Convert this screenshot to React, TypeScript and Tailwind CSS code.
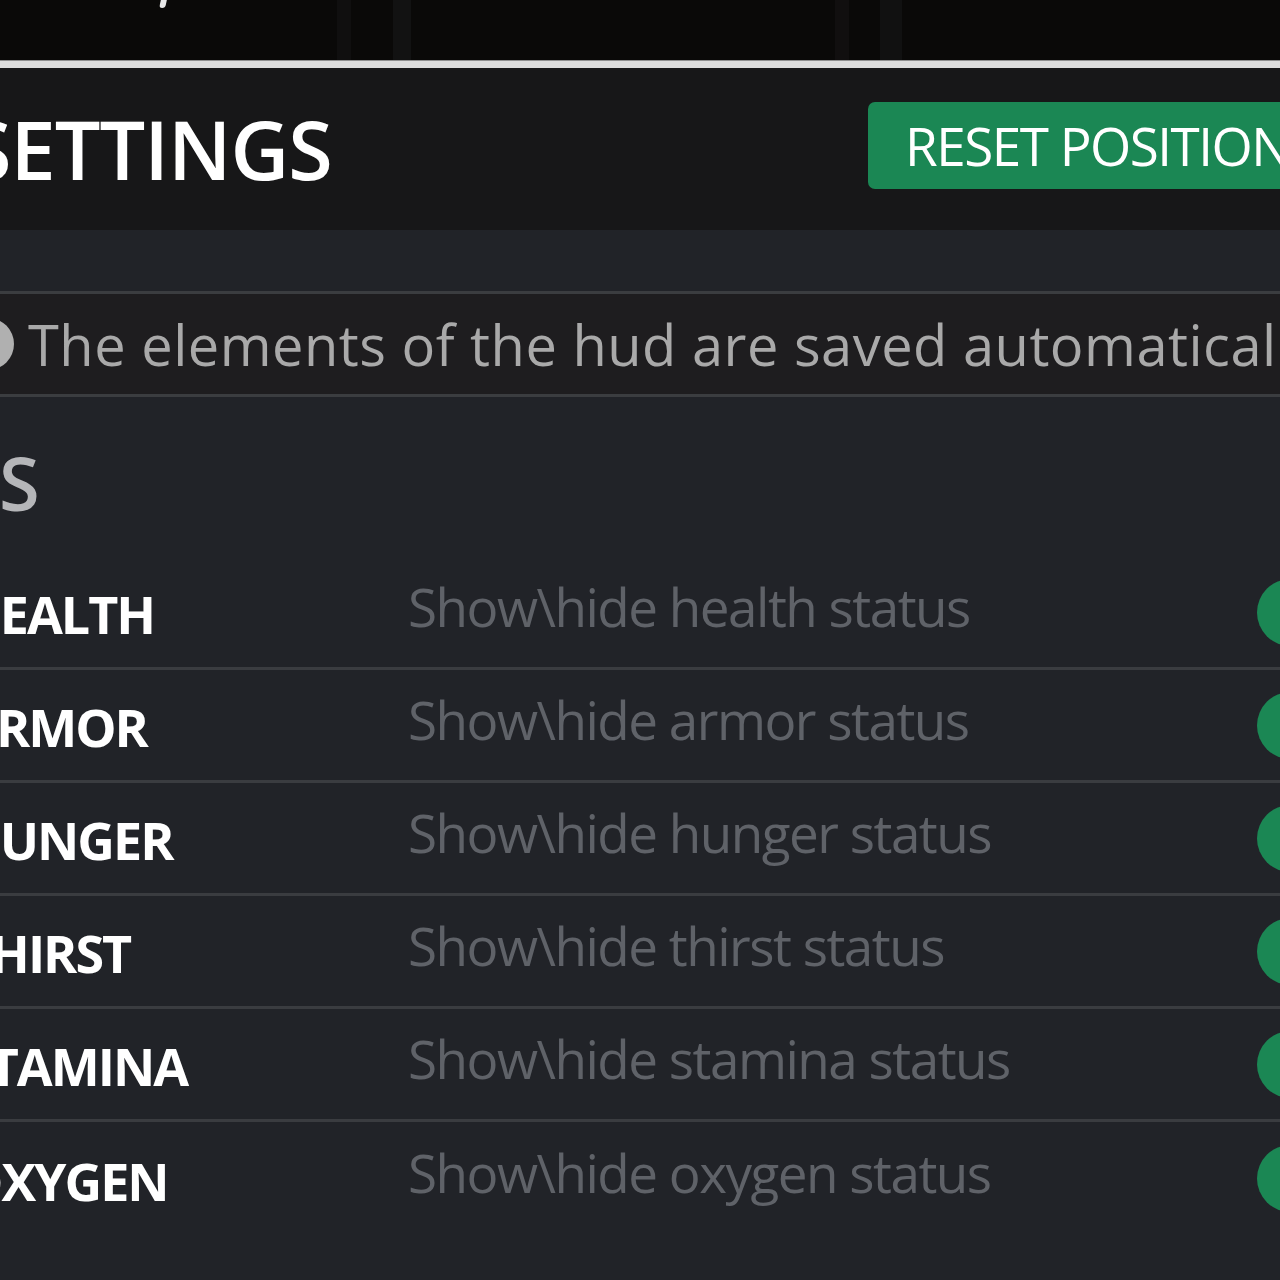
import React from "react";

const rows = [
  { label: "HEALTH", desc: "Show\\hide health status" },
  { label: "ARMOR", desc: "Show\\hide armor status" },
  { label: "HUNGER", desc: "Show\\hide hunger status" },
  { label: "THIRST", desc: "Show\\hide thirst status" },
  { label: "STAMINA", desc: "Show\\hide stamina status" },
  { label: "OXYGEN", desc: "Show\\hide oxygen status" },
];

export default function App() {
  return (
    <div
      className="w-[1280px] h-[1280px] overflow-hidden bg-[#212328] flex flex-col"
      style={{ fontFamily: '"Open Sans", "Noto Sans", sans-serif' }}
    >
      {/* top dark scene */}
      <div className="relative h-[60px] shrink-0 bg-[#0a0908] overflow-hidden">
        <div className="absolute left-[337px] top-0 h-full w-[14px] bg-[#100f0f]" />
        <div className="absolute left-[393px] top-0 h-full w-[18px] bg-[#121212]" />
        <div className="absolute left-[835px] top-0 h-full w-[14px] bg-[#110f0f]" />
        <div className="absolute left-[880px] top-0 h-full w-[22px] bg-[#111111]" />
        <div className="absolute left-[160px] top-0 h-[8px] w-[6px] bg-[#e8e8e8] rounded-b-full -skew-x-12" />
      </div>
      <div className="h-[8px] shrink-0 bg-[#dcdcdc] border-t border-[#8e8e8e]" />

      {/* header */}
      <div className="h-[162px] shrink-0 bg-[#171718] grid grid-cols-[868px_1fr] overflow-hidden">
        <div className="flex items-center">
          <span className="-ml-[33px] text-[81px] font-semibold text-white leading-none tracking-[-1px] pb-[2px] whitespace-nowrap">
            SETTINGS
          </span>
        </div>
        <div className="pt-[34px]">
          <div className="w-[520px] h-[87px] rounded-[7px] bg-[#1b8754] flex items-center pl-[37px]">
            <span className="text-[53px] text-white leading-none tracking-[-1.5px] whitespace-nowrap">
              RESET POSITION
            </span>
          </div>
        </div>
      </div>

      {/* body */}
      <div className="flex flex-col pt-[61px]">
        <div className="h-[106px] border-y-[3px] border-[#3b3d40] bg-[#1e1d1f] flex items-center whitespace-nowrap">
          <div className="-ml-[38px] w-[52px] h-[52px] rounded-full bg-[#b0b0b0] shrink-0" />
          <span className="ml-[14px] text-[56px] text-[#a9a9a9] leading-none tracking-[0.5px]">
            The elements of the hud are saved automatically
          </span>
        </div>

        <div className="h-[160px] flex items-center pt-[12px]">
          <span className="-ml-[326px] text-[74px] font-semibold text-[#b5b6b9] leading-none tracking-[-1px] whitespace-nowrap">
            ELEMENTS
          </span>
        </div>

        <div className="flex flex-col">
          {rows.map((r, i) => (
            <div
              key={r.label}
              className={
                "h-[113px] flex items-center shrink-0 " +
                (i < rows.length - 1 ? "border-b-[3px] border-[#3a3c40]" : "")
              }
            >
              <div className="w-[446px] -ml-[38px] shrink-0 pt-[4px]">
                <span className="text-[52px] font-bold text-white leading-none tracking-[-2px] whitespace-nowrap">
                  {r.label}
                </span>
              </div>
              <div className="w-[849px] shrink-0 pb-[12px]">
                <span className="text-[53px] text-[#5f6268] leading-none tracking-[-1.5px] whitespace-nowrap">
                  {r.desc}
                </span>
              </div>
              <div className="w-[120px] h-[67px] rounded-full bg-[#1b8754] shrink-0" />
            </div>
          ))}
        </div>
      </div>
    </div>
  );
}
